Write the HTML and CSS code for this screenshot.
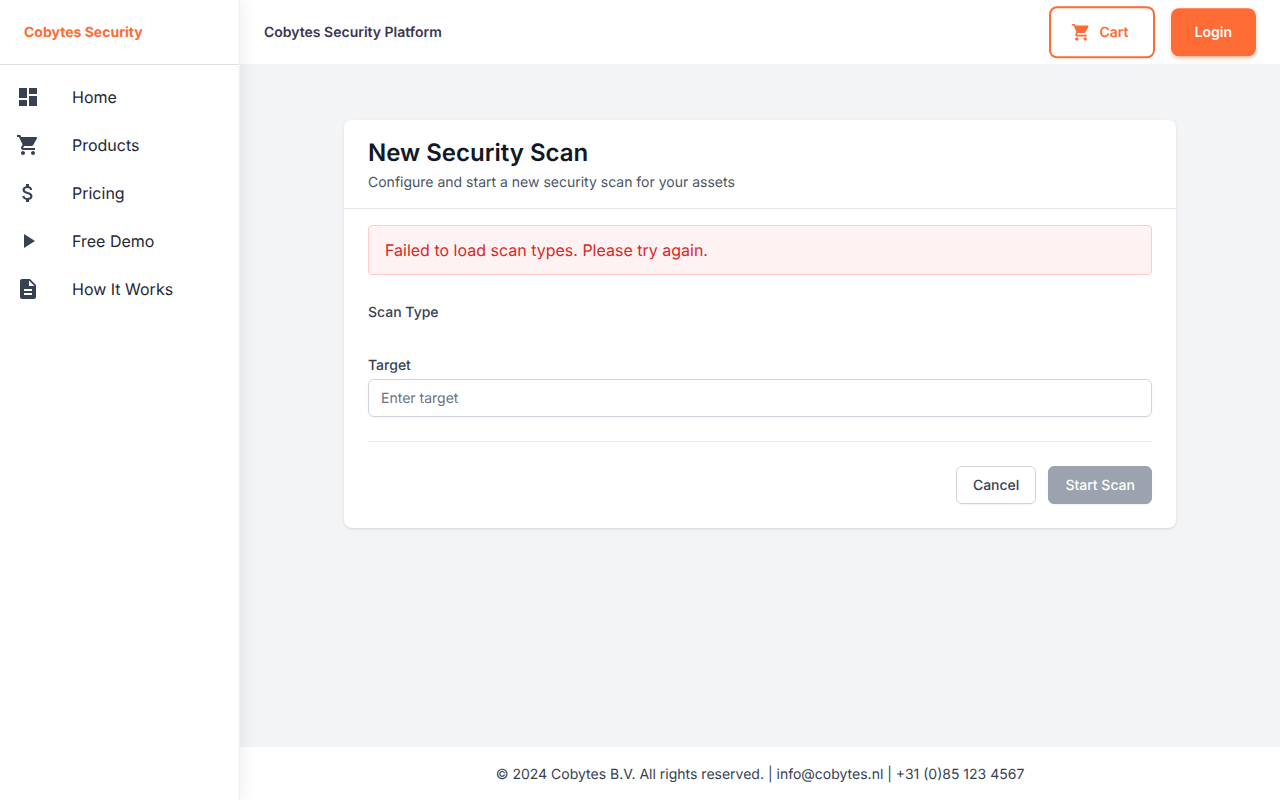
FILE: index.html
```html
<!DOCTYPE html>
<html lang="en">
<head>
<meta charset="utf-8">
<title>New Security Scan</title>
<link rel="stylesheet" href="styles.css">
</head>
<body>
<div class="app">
  <aside class="sidebar">
    <div class="brand">Cobytes Security</div>
    <nav class="nav">
      <a class="nav-item"><svg class="icon" viewBox="0 0 24 24"><path d="M3 13h8V3H3v10zm0 8h8v-6H3v6zm10 0h8V11h-8v10zm0-18v6h8V3h-8z"/></svg><span>Home</span></a>
      <a class="nav-item"><svg class="icon" viewBox="0 0 24 24"><path d="M7 18c-1.1 0-1.99.9-1.99 2S5.9 22 7 22s2-.9 2-2-.9-2-2-2zM1 2v2h2l3.600 7.590-1.350 2.450c-.16.28-.25.61-.25.960 0 1.100.9 2 2 2h12v-2H7.420c-.14 0-.25-.11-.25-.25l.03-.12.9-1.630h7.450c.75 0 1.410-.41 1.750-1.030l3.580-6.490c.08-.14.12-.31.12-.480 0-.55-.45-1-1-1H5.210l-.94-2H1zm16 16c-1.100 0-1.990.9-1.990 2s.89 2 1.990 2 2-.9 2-2-.9-2-2-2z"/></svg><span>Products</span></a>
      <a class="nav-item"><svg class="icon" viewBox="0 0 24 24"><path d="M11.800 10.900c-2.270-.59-3-1.200-3-2.150 0-1.090 1.010-1.850 2.700-1.850 1.780 0 2.440.85 2.500 2.100h2.210c-.07-1.720-1.120-3.300-3.210-3.810V3h-3v2.160c-1.940.42-3.500 1.680-3.500 3.610 0 2.310 1.910 3.460 4.700 4.130 2.500.6 3 1.480 3 2.410 0 .69-.49 1.790-2.700 1.790-2.060 0-2.870-.92-2.980-2.100h-2.200c.12 2.190 1.760 3.420 3.680 3.830V21h3v-2.150c1.950-.37 3.500-1.500 3.500-3.550 0-2.840-2.430-3.810-4.700-4.400z"/></svg><span>Pricing</span></a>
      <a class="nav-item"><svg class="icon" viewBox="0 0 24 24"><path d="M8 5v14l11-7z"/></svg><span>Free Demo</span></a>
      <a class="nav-item"><svg class="icon" viewBox="0 0 24 24"><path d="M14 2H6c-1.100 0-1.990.9-1.990 2L4 20c0 1.100.89 2 1.990 2H18c1.100 0 2-.9 2-2V8l-6-6zm2 16H8v-2h8v2zm0-4H8v-2h8v2zm-3-5V3.500L18.500 9H13z"/></svg><span>How It Works</span></a>
    </nav>
  </aside>
  <div class="page">
    <header class="topbar">
      <div class="topbar-title">Cobytes Security Platform</div>
      <div class="topbar-actions">
        <button class="cart"><svg class="cart-icon" viewBox="0 0 24 24"><path d="M7 18c-1.100 0-1.990.9-1.990 2S5.900 22 7 22s2-.9 2-2-.9-2-2-2zM1 2v2h2l3.600 7.590-1.350 2.450c-.16.28-.25.61-.25.960 0 1.100.9 2 2 2h12v-2H7.420c-.14 0-.25-.11-.25-.25l.03-.12.9-1.630h7.450c.75 0 1.410-.41 1.750-1.030l3.580-6.490c.08-.14.12-.31.12-.480 0-.55-.45-1-1-1H5.210l-.94-2H1zm16 16c-1.100 0-1.990.9-1.990 2s.89 2 1.990 2 2-.9 2-2-.9-2-2-2z"/></svg><span class="cart-text">Cart</span></button>
        <button class="login">Login</button>
      </div>
    </header>
    <main class="main">
      <section class="card">
        <div class="card-head">
          <h1>New Security Scan</h1>
          <p>Configure and start a new security scan for your assets</p>
        </div>
        <form class="card-body">
          <div class="alert">Failed to load scan types. Please try again.</div>
          <div class="label scan-type">Scan Type</div>
          <label class="label" for="target">Target</label>
          <input class="input" id="target" type="text" placeholder="Enter target">
          <div class="actions">
            <button type="button" class="btn cancel">Cancel</button>
            <button type="button" class="btn start" disabled>Start Scan</button>
          </div>
        </form>
      </section>
    </main>
    <footer class="footer">© 2024 Cobytes B.V. All rights reserved. | info@cobytes.nl | +31 (0)85 123 4567</footer>
  </div>
</div>
</body>
</html>
```
FILE: styles.css
```css
* { box-sizing: border-box; margin: 0; }
body { font: 16px/24px Inter, sans-serif; color: #111827; text-rendering: geometricPrecision; }
button, input { font: inherit; text-rendering: inherit; }
.app { display: flex; height: 800px; overflow: hidden; }
.sidebar { width: 240px; flex: none; background: #fff; border-right: 1px solid #f0f0f1; box-shadow: 4px 0 16px rgba(0,0,0,.06); position: relative; z-index: 2; }
.brand { height: 65px; padding: 2px 24px 0; display: flex; align-items: center; border-bottom: 1px solid #e0e0e0; color: #ff6b35; font-size: 14px; font-weight: 700; }
.nav { padding-top: 8px; }
.nav-item { height: 48px; padding: 0 16px; display: flex; align-items: center; gap: 32px; color: #1f2937; }
.icon { width: 24px; height: 24px; fill: #374151; }
.page { flex: 1; display: flex; flex-direction: column; background: #f3f4f6; }
.topbar { height: 64px; flex: none; padding: 0 24px; display: flex; align-items: center; justify-content: space-between; background: #fff; }
.topbar-title { padding-top: 2px; font-size: 14px; font-weight: 600; color: #3d3553; }
.topbar-actions { display: flex; align-items: center; gap: 16px; }
.cart, .login { display: flex; align-items: center; border-radius: 8px; font-size: 14px; font-weight: 600; transform: translateY(.25px); }
.cart { height: 52px; padding: 0 24px 0 20px; gap: 8px; background: #fff; color: #ff6b35; border: 2px solid #ff6b35; }
.cart-text { padding-top: 1px; }
.cart-icon { width: 20px; height: 20px; fill: currentColor; }
.login { height: 48px; padding: 1px 24px 0; border: 0; background: #ff6b35; color: #fff; box-shadow: 0 2px 4px rgba(255,107,53,.3); }
.main { flex: 1; padding: 56px 104px; }
.card { height: 408px; background: #fff; border-radius: 8px; box-shadow: 0 1px 3px rgba(0,0,0,.1), 0 1px 2px -1px rgba(0,0,0,.1); }
.card-head { height: 89px; padding: 17px 24px 15px; border-bottom: 1px solid #e5e7eb; }
.card-head h1 { font-size: 24px; line-height: 32px; font-weight: 600; }
.card-head p { margin-top: 4px; font-size: 14px; line-height: 20px; color: #4b5563; }
.card-body { padding: 16px 24px; }
.alert { padding: 12px 16px; border: 1px solid #fecaca; border-radius: 4px; background: #fef2f2; color: #dc2626; }
.label { display: block; font-size: 14px; line-height: 20px; font-weight: 500; color: #374151; }
.scan-type { margin: 28px 0 33px; }
.input { display: block; width: 100%; height: 38px; margin-top: 3px; padding: 8px 12px; border: 1px solid #d1d5db; border-radius: 6px; font-size: 14px; line-height: 20px; box-shadow: 0 1px 2px rgba(0,0,0,.05); }
.input::placeholder { color: #6b7280; }
.actions { margin-top: 24px; padding-top: 24px; border-top: 1px solid #e5e7eb; display: flex; justify-content: flex-end; gap: 12px; }
.btn { height: 38px; padding: 2px 16px 0; border: 1px solid #d1d5db; border-radius: 6px; background: #fff; color: #374151; font-size: 14px; line-height: 20px; font-weight: 500; box-shadow: 0 1px 2px rgba(0,0,0,.05); }
.start { background: #9ca3af; border-color: #9ca3af; color: #fff; }
.footer { height: 53px; flex: none; padding-top: 2px; display: flex; align-items: center; justify-content: center; background: #fff; font-size: 14px; line-height: 20px; color: #374151; }
```
